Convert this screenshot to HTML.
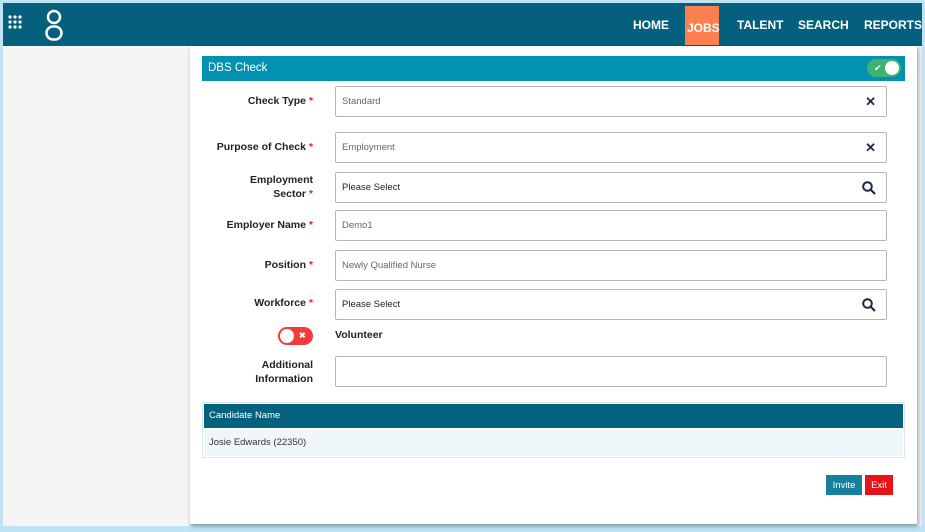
<!DOCTYPE html><html><head><style>
body{margin:0;width:925px;height:532px;background:#bfe3f3;font-family:"Liberation Sans",sans-serif;position:relative;overflow:hidden}
.a{position:absolute}
.hdr{left:3px;top:3px;width:919px;height:43px;background:#04607c}
.nav{color:#fff;font-weight:bold;font-size:12px;top:18px}
.lbl{font-size:10.5px;font-weight:bold;color:#222;text-align:right;width:160px;left:153px}
.lbl b{color:#e3242b}
.inp{left:335px;width:552px;height:31px;border:1px solid #b5b5b5;border-radius:2px;background:#fff;font-size:9.5px;color:#666;line-height:29px;text-indent:6px;box-sizing:border-box}
.x{position:absolute;right:10px;top:0;font-size:13px;color:#1e2a40;font-weight:bold}
</style></head><body>
<div class="a hdr"></div>
<svg class="a" style="left:8px;top:15px" width="16" height="16"><g fill="#fff"><circle cx="2" cy="2" r="1.6"/><circle cx="7" cy="2" r="1.6"/><circle cx="12" cy="2" r="1.6"/><circle cx="2" cy="7" r="1.6"/><circle cx="7" cy="7" r="1.6"/><circle cx="12" cy="7" r="1.6"/><circle cx="2" cy="12" r="1.6"/><circle cx="7" cy="12" r="1.6"/><circle cx="12" cy="12" r="1.6"/></g></svg>
<svg class="a" style="left:44px;top:9px" width="20" height="34"><g fill="none" stroke="#fff" stroke-width="2.5"><circle cx="10" cy="8" r="6"/><rect x="2.5" y="17.5" width="15" height="13" rx="6.5"/></g></svg>
<div class="a" style="left:685px;top:6px;width:34px;height:39px;background:#fb7f4f"></div>
<div class="a nav" style="left:633px">HOME</div>
<div class="a nav" style="left:687px;top:21px">JOBS</div>
<div class="a nav" style="left:737px">TALENT</div>
<div class="a nav" style="left:798px">SEARCH</div>
<div class="a nav" style="left:864px">REPORTS</div>
<div class="a" style="left:3px;top:46px;width:187px;height:480px;background:#f5f5f5"></div>
<div class="a" style="left:917px;top:46px;width:5px;height:480px;background:#eee"></div>
<div class="a" style="left:190px;top:46px;width:727px;height:478px;background:#fff;box-shadow:1px 2px 4px rgba(0,0,0,.35)"></div>
<div class="a" style="left:202px;top:56px;width:703px;height:25px;background:#0092b0;color:#fff;font-size:11.5px;line-height:25px;text-indent:6px">DBS Check</div>
<div class="a" style="left:867px;top:59px;width:34px;height:18px;background:#3cb371;border-radius:9px"><div class="a" style="right:2px;top:2px;width:14px;height:14px;border-radius:7px;background:#fff"></div><div class="a" style="left:7px;top:3px;color:#fff;font-size:9px;line-height:12px">✔</div></div>
<div class="a lbl" style="top:95px">Check Type <b>*</b></div>
<div class="a inp" style="top:86px">Standard<span class="x">✕</span></div>
<div class="a lbl" style="top:141px">Purpose of Check <b>*</b></div>
<div class="a inp" style="top:132px">Employment<span class="x">✕</span></div>
<div class="a lbl" style="top:173px;line-height:14px">Employment<br>Sector <b>*</b></div>
<div class="a inp" style="top:172px;color:#222">Please Select<svg class="x" style="top:8px" width="14" height="14"><circle cx="5.5" cy="5.5" r="4.3" fill="none" stroke="#1e2a40" stroke-width="2"/><path d="M9 9l4 4" stroke="#1e2a40" stroke-width="2.2"/></svg></div>
<div class="a lbl" style="top:219px">Employer Name <b>*</b></div>
<div class="a inp" style="top:210px">Demo1</div>
<div class="a lbl" style="top:259px">Position <b>*</b></div>
<div class="a inp" style="top:250px">Newly Qualified Nurse</div>
<div class="a lbl" style="top:297px">Workforce <b>*</b></div>
<div class="a inp" style="top:289px;color:#222">Please Select<svg class="x" style="top:8px" width="14" height="14"><circle cx="5.5" cy="5.5" r="4.3" fill="none" stroke="#1e2a40" stroke-width="2"/><path d="M9 9l4 4" stroke="#1e2a40" stroke-width="2.2"/></svg></div>
<div class="a" style="left:278px;top:327px;width:35px;height:18px;background:#f03c3c;border-radius:9px"><div class="a" style="left:2px;top:2px;width:14px;height:14px;border-radius:7px;background:#fff"></div><div class="a" style="left:21px;top:3px;color:#fff;font-size:8px;line-height:12px;font-weight:bold">✖</div></div>
<div class="a" style="left:335px;top:329px;font-size:10.5px;font-weight:bold;color:#222">Volunteer</div>
<div class="a lbl" style="top:358px;line-height:14px">Additional<br>Information</div>
<div class="a inp" style="top:356px"></div>
<div class="a" style="left:202px;top:402px;width:703px;height:56px;border:1px solid #dde8ec;box-sizing:border-box"></div>
<div class="a" style="left:204px;top:404px;width:699px;height:24px;background:#04627e;color:#fff;font-size:9.5px;line-height:24px;text-indent:5px">Candidate Name</div>
<div class="a" style="left:204px;top:430px;width:699px;height:26px;background:#eff7fb;color:#333;font-size:9.5px;line-height:26px;text-indent:5px">Josie Edwards (22350)</div>
<div class="a" style="left:826px;top:475px;width:36px;height:20px;background:#17809e;color:#fff;font-size:9.5px;line-height:20px;text-align:center"><span style="position:relative;top:1px">Invite</span></div>
<div class="a" style="left:865px;top:475px;width:28px;height:20px;background:#e81318;color:#fff;font-size:9.5px;line-height:20px;text-align:center"><span style="position:relative;top:1px">Exit</span></div>
</body></html>
